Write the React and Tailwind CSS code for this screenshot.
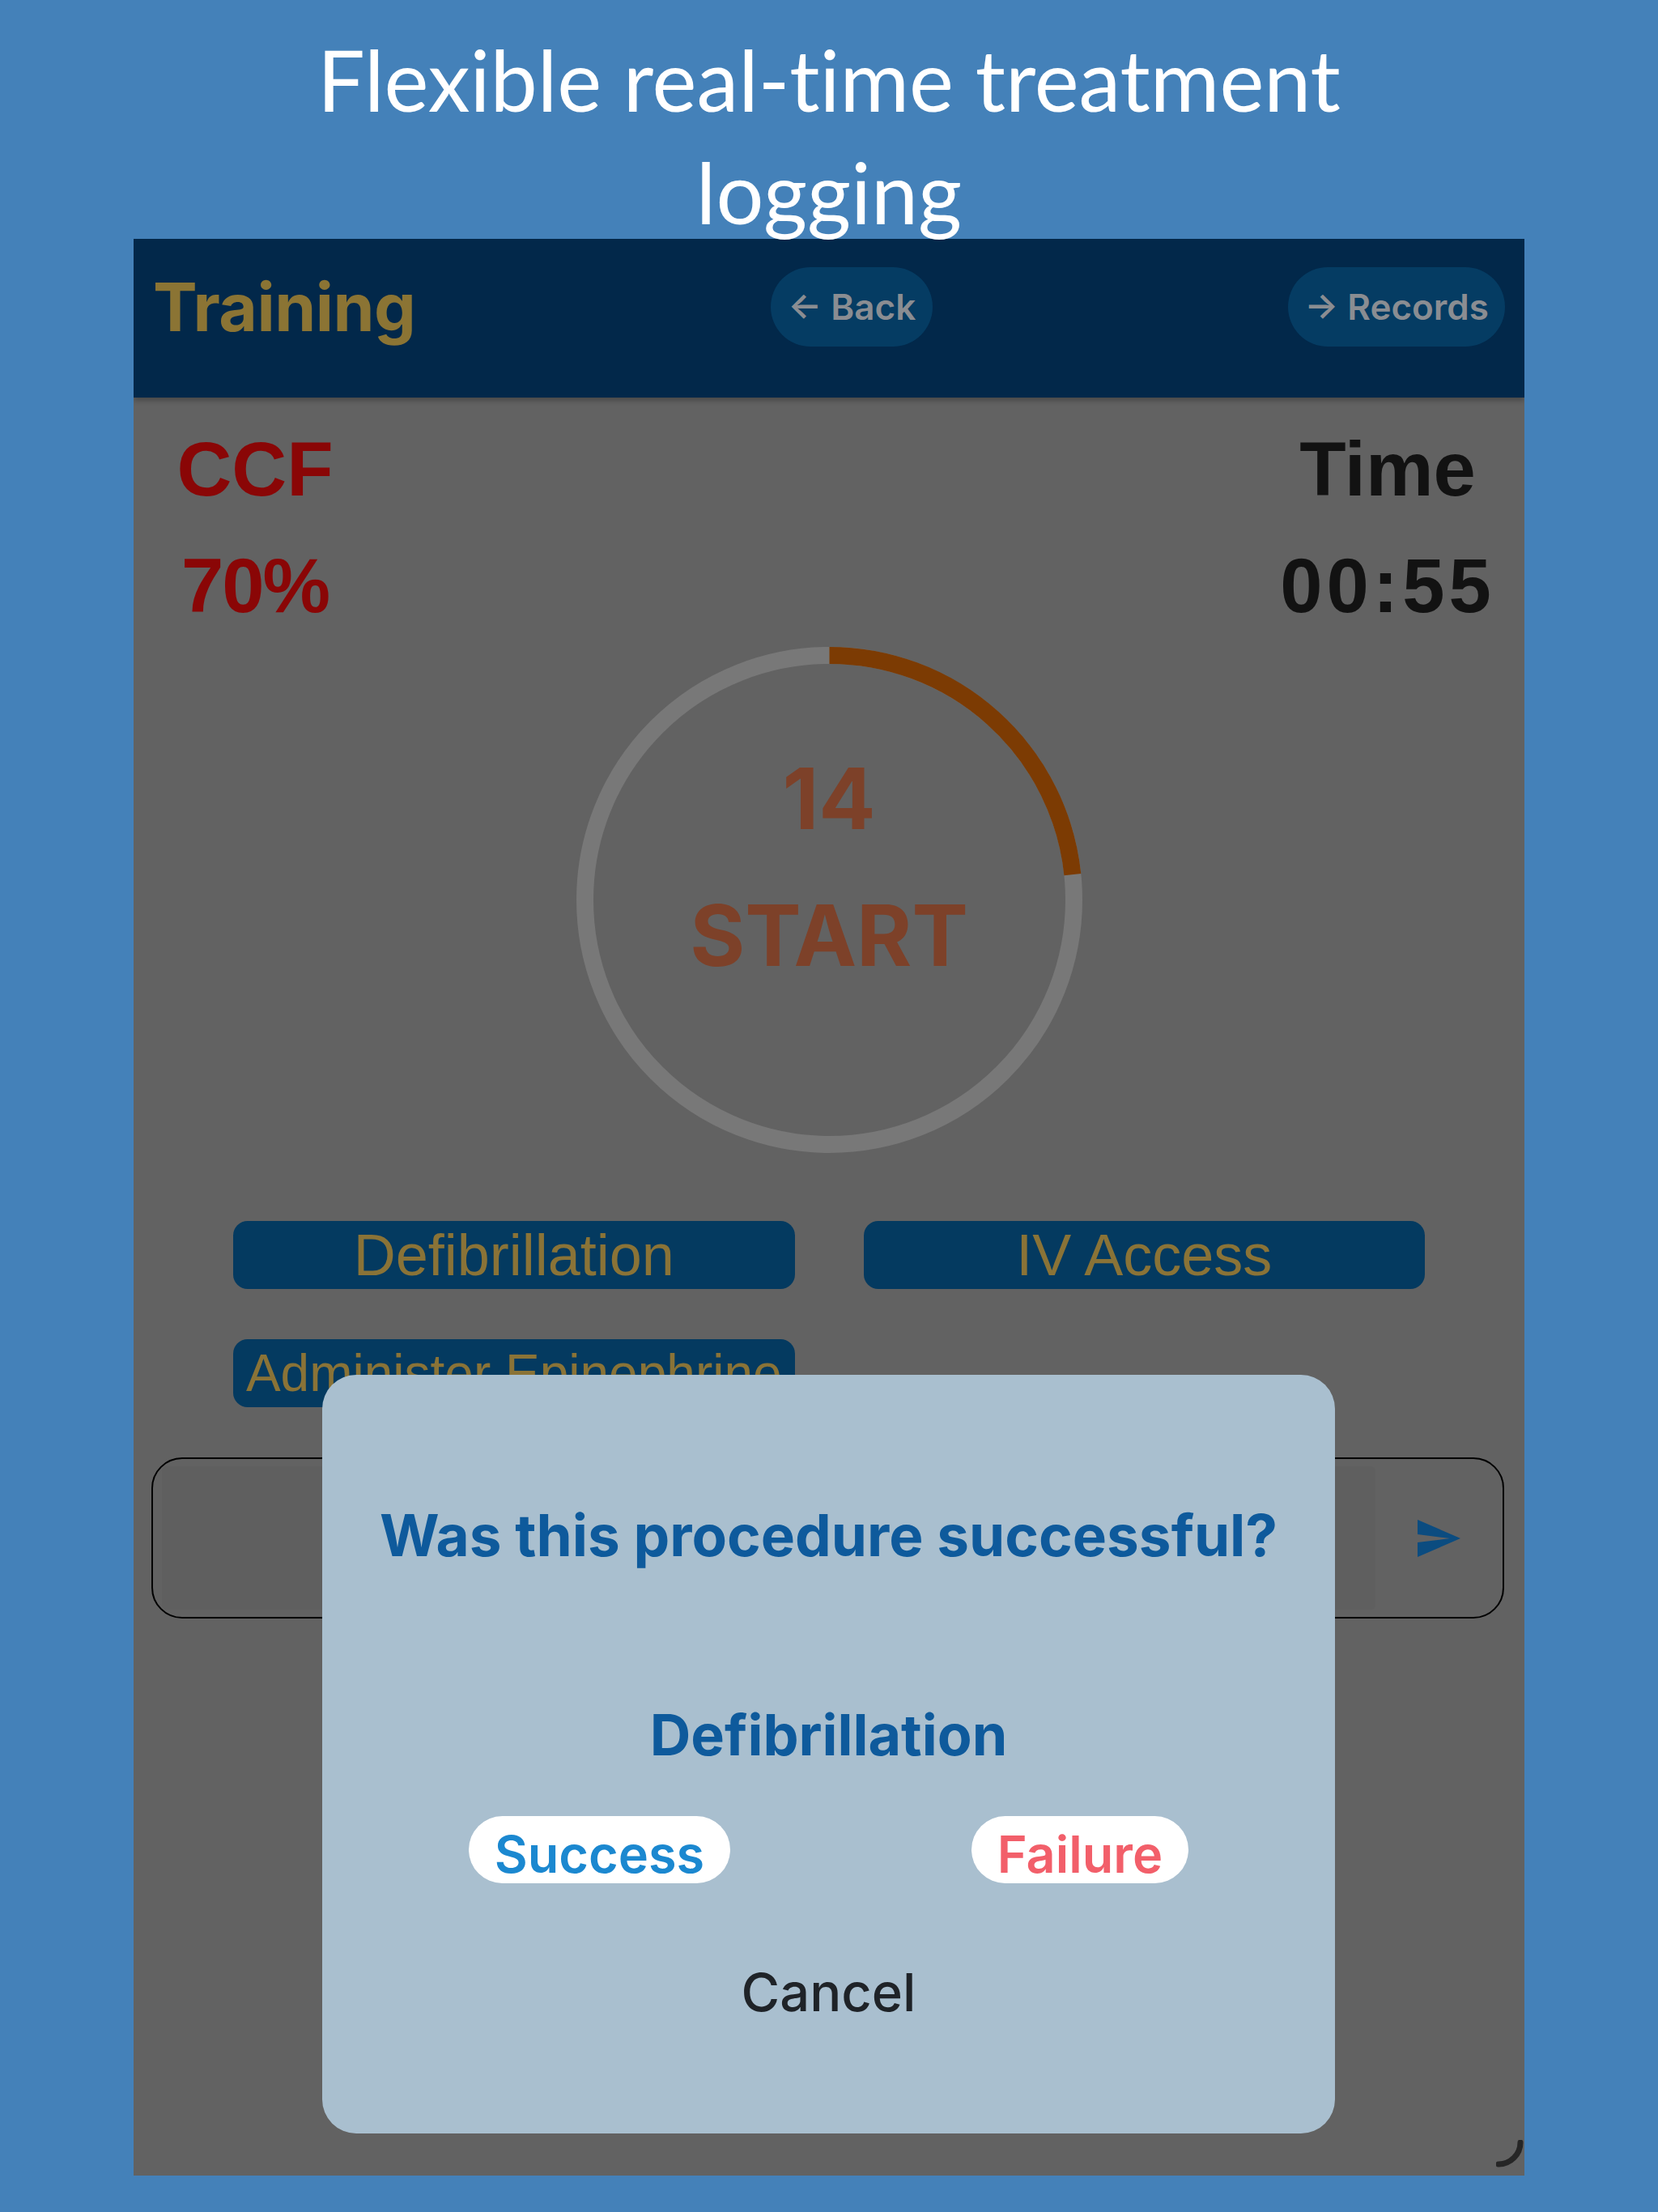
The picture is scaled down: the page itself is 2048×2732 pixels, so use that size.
import React from 'react';

const RING_SIZE = 625;
const RING_STROKE = 21;
const RING_R = ( RING_SIZE - RING_STROKE ) / 2;
const RING_LEN = 2 * Math.PI * RING_R;

const actions = [
	{ label: 'Defibrillation', size: 'text-[72px]' },
	{ label: 'IV Access', size: 'text-[72px]' },
	{ label: 'Administer Epinephrine', size: 'text-[64px]' },
];

const CompressionRing = ( { count, total } ) => {
	const done = ( count / total ) * RING_LEN;
	return (
		<div className="relative mx-auto mt-[3px] w-[625px] h-[625px]">
			<svg width={ RING_SIZE } height={ RING_SIZE } className="block -rotate-90">
				<circle
					cx={ RING_SIZE / 2 }
					cy={ RING_SIZE / 2 }
					r={ RING_R }
					fill="none"
					stroke="#787878"
					strokeWidth={ RING_STROKE }
				/>
				<circle
					cx={ RING_SIZE / 2 }
					cy={ RING_SIZE / 2 }
					r={ RING_R }
					fill="none"
					stroke="#7c3b03"
					strokeWidth={ RING_STROKE }
					strokeDasharray={ `${ done } ${ RING_LEN }` }
				/>
			</svg>
			<div className="absolute inset-0 flex flex-col items-center pt-[103px] font-['Inter',sans-serif] font-bold text-[104px] leading-[169px] text-[#7d4129]">
				<span>{ count }</span>
				<span>START</span>
			</div>
		</div>
	);
};

const OutcomeDialog = () => (
	<div className="absolute left-[233px] top-[1403px] w-[1251px] h-[937px] rounded-[42px] bg-[#a9bfcf] flex flex-col items-center px-[32px] pt-[148px] font-['Inter',sans-serif]">
		<p className="text-[71px] leading-[100px] font-bold text-[#0e5a9c]">
			Was this procedure successful?
		</p>
		<p className="mt-[147px] text-[70px] leading-[100px] font-bold text-[#0e5a9c]">
			Defibrillation
		</p>
		<div className="mt-[50px] w-full flex justify-around">
			<button className="h-[83px] px-[32px] rounded-full bg-white text-[63px] font-semibold text-[#1b88d0]">
				Success
			</button>
			<button className="h-[83px] px-[32px] rounded-full bg-white text-[63px] font-semibold text-[#f25f6a]">
				Failure
			</button>
		</div>
		<p className="mt-[85px] text-[65px] leading-[100px] font-medium text-[#1f2328]">
			Cancel
		</p>
	</div>
);

export default function App() {
	return (
		<div className="w-[2048px] min-h-[2732px] bg-[#4481b9]">
			{/* headline, its descenders run into the app bar */}
			<div className="relative z-10 h-[295px] pt-[28px] text-center font-['Lato',sans-serif] text-[104px] leading-[139px] text-white [font-variant-ligatures:none]">
				<p>Flexible real-time treatment</p>
				<p>logging</p>
			</div>

			<div className="relative ml-[165px] w-[1718px] h-[2392px] bg-[#626262] overflow-hidden">
				{/* app bar */}
				<div className="h-[196px] bg-[#02284a] flex items-center justify-between px-[24px] pb-[28px] shadow-[0_4px_6px_rgba(0,0,0,0.25)] font-['Inter',sans-serif]">
					<span className="text-[82px] font-bold text-[#8b7434] tracking-[-0.5px]">Training</span>
					<button className="h-[98px] px-[21px] rounded-full bg-[#053c63] text-[44px] font-semibold text-[#8a8d92]">
						← Back
					</button>
					<button className="h-[98px] px-[20px] rounded-full bg-[#053c63] text-[44px] font-semibold text-[#8a8d92]">
						→ Records
					</button>
				</div>

				{/* CCF and elapsed time */}
				<div className="flex justify-between pt-[17px] pr-[19px] font-['Liberation_Sans',Arial,sans-serif] font-bold text-[94px] leading-[144px]">
					<div className="w-[300px] text-center text-[#8a0606]">
						<p>CCF</p>
						<p className="tracking-[-2px]">70%</p>
					</div>
					<div className="w-[300px] text-center text-[#121212]">
						<p>Time</p>
						<p className="tracking-[5px]">00:55</p>
					</div>
				</div>

				<CompressionRing count={ 14 } total={ 60 } />

				{/* procedure buttons */}
				<div className="mt-[84px] px-[123px] grid grid-cols-2 gap-x-[85px] gap-y-[62px] font-['Liberation_Sans',Arial,sans-serif]">
					{ actions.map( ( action ) => (
						<div
							key={ action.label }
							className={ `h-[84px] rounded-[18px] bg-[#043a60] flex items-center justify-center text-[#8a7337] whitespace-nowrap ${ action.size }` }
						>
							{ action.label }
						</div>
					) ) }
				</div>

				{/* note input */}
				<div className="mt-[62px] ml-[22px] mr-[25px] h-[199px] rounded-[38px] border-2 border-black flex items-center pl-[11px]">
					<div className="flex-1 h-[177px] rounded-[6px] bg-[#5f5f5f]"></div>
					<div className="w-[157px] flex justify-center">
						<svg width="53" height="46" viewBox="0 0 53 46">
							<path d="M0 0 L53 23 L0 46 L0 28 L40 23 L0 18 Z" fill="#0b4c80" />
						</svg>
					</div>
				</div>

				<OutcomeDialog />

				{/* corner grip */}
				<svg className="absolute right-[1px] bottom-[10px]" width="34" height="34" viewBox="0 0 34 34">
					<path d="M30 3 A27 27 0 0 1 3 30" fill="none" stroke="#262626" strokeWidth="7" strokeLinecap="round" />
				</svg>
			</div>
		</div>
	);
}
